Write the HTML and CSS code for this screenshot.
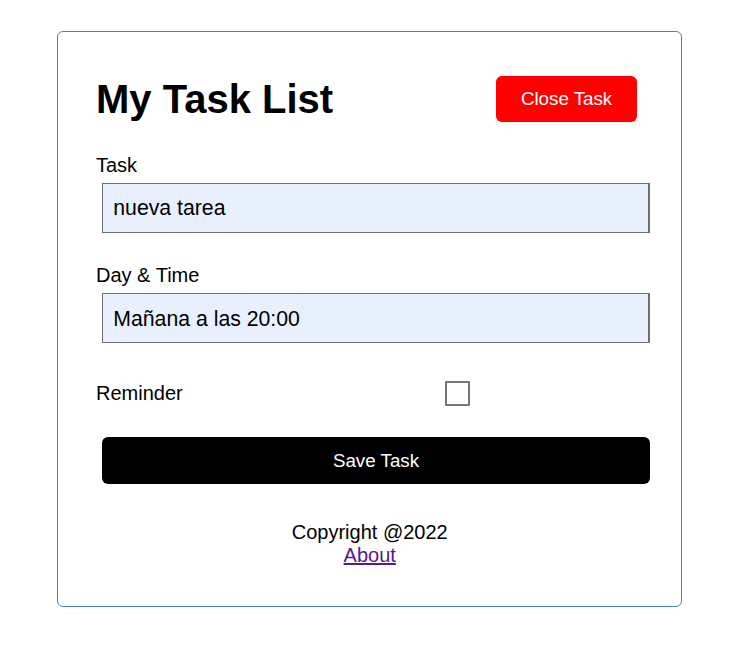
FILE: index.html
```html
<!DOCTYPE html>
<html lang="en">
<head>
<meta charset="utf-8">
<title>Task Tracker</title>
<link rel="stylesheet" href="styles.css">
</head>
<body>
<div class="container">
  <header class="header">
    <h1 class="title">My Task List</h1>
    <button class="btn btn-close">Close Task</button>
  </header>
  <form class="add-form">
    <div class="form-control">
      <label>Task</label>
      <input type="text" class="text-input" value="nueva tarea">
    </div>
    <div class="form-control">
      <label>Day &amp; Time</label>
      <input type="text" class="text-input" value="Mañana a las 20:00">
    </div>
    <div class="form-control form-control-check">
      <label>Reminder</label>
      <span class="check-wrap"><span class="check-box"></span></span>
    </div>
    <button type="button" class="btn btn-block">Save Task</button>
  </form>
  <footer class="footer">
    <p>Copyright @2022</p>
    <a href="#" class="about">About</a>
  </footer>
</div>
</body>
</html>
```
FILE: styles.css
```css
* {
  box-sizing: border-box;
  margin: 0;
  padding: 0;
}

body {
  font-family: "Liberation Sans", Arial, sans-serif;
  font-size: 20px;
  color: #000;
  background: #fff;
  padding: 0 0 0 4px;
}

.container {
  width: 625px;
  margin: 31px auto 0;
  border: 1px solid steelblue;
  border-radius: 6px;
  padding: 37.5px 37.5px 38.5px 38px;
}

.header {
  display: flex;
  justify-content: space-between;
  align-items: center;
  margin-bottom: 25px;
}

.title {
  font-size: 40px;
  font-weight: bold;
  line-height: 46px;
}

.btn {
  display: inline-block;
  background: #000;
  color: #fff;
  border: none;
  padding: 12.5px 25px;
  margin: 6.25px;
  border-radius: 6px;
  font-size: 18.75px;
  line-height: 21.5px;
  font-family: inherit;
  cursor: pointer;
}

.btn-close {
  background: #ff0000;
}

.btn-block {
  display: block;
  width: 100%;
}

.form-control {
  display: flow-root;
  margin: 25px 0;
}

.form-control label {
  display: block;
  line-height: 23px;
}

.text-input {
  display: block;
  width: 100%;
  height: 50px;
  margin: 6.25px;
  padding: 5px 10px 3px;
  font-size: 21.25px;
  font-family: inherit;
  color: #000;
  background: #e8f0fe;
  border-style: solid;
  border-color: #6f6f6f;
  border-width: 1px 2px 1px 1px;
  outline: none;
}

.form-control-check {
  display: flex;
  align-items: center;
}

.form-control-check label {
  flex: 1;
}

.check-wrap {
  flex: 2;
  display: flex;
  align-items: center;
  justify-content: center;
  height: 25px;
  margin: 6.25px;
  padding-right: 2px;
}

.check-box {
  width: 25px;
  height: 25px;
  border: 2px solid #767676;
  border-radius: 1px;
  background: #fff;
}

.footer {
  margin-top: 37.5px;
  text-align: center;
  line-height: 23px;
}

.about {
  color: #551a8b;
  text-decoration: underline;
}
```
